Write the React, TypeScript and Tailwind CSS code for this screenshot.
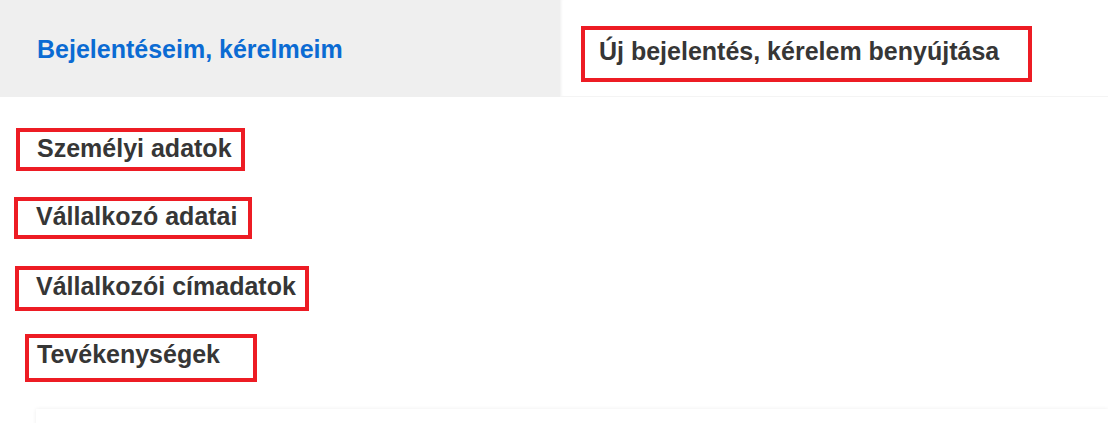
const items = [
  { label: 'Személyi adatok', box: 'mt-[31px] ml-[16px] w-[229px] h-[43px] pl-[17px] pb-[2px]' },
  { label: 'Vállalkozó adatai', box: 'mt-[26px] ml-[14px] w-[238px] h-[42px] pl-[18px] pb-[2px]' },
  { label: 'Vállalkozói címadatok', box: 'mt-[27px] ml-[15px] w-[294px] h-[45px] pl-[17px] pb-[4px]' },
  { label: 'Tevékenységek', box: 'mt-[23px] ml-[25px] w-[232px] h-[48px] pl-[8px] pb-[7px]' },
]

export default function App() {
  return (
    <div className="h-[423px] w-[1108px] overflow-hidden bg-white font-['Liberation_Sans',Arial,sans-serif]">
      <div className="flex h-[97px]">
        <div className="flex w-[560px] items-center bg-[#efefef] pl-[37px] pt-[2px]">
          <span className="text-[25px] font-bold text-[#0b6bd3]">Bejelentéseim, kérelmeim</span>
        </div>
        <div className="flex-1 border-b border-[#f4f4f4] bg-white pl-[21px] pt-[26px] shadow-[inset_3px_0_3px_-2px_rgba(0,0,0,0.07)]">
          <div className="flex h-[56px] w-[451px] items-center border-4 border-[#ed1c24] pl-[14px] pb-[4px]">
            <span className="text-[25px] font-bold text-[#363636]">Új bejelentés, kérelem benyújtása</span>
          </div>
        </div>
      </div>

      <div className="flex flex-col items-start">
        {items.map((item) => (
          <div key={item.label} className={`flex items-center border-4 border-[#ed1c24] ${item.box}`}>
            <span className="text-[25px] font-bold text-[#363636]">{item.label}</span>
          </div>
        ))}
      </div>

      <div className="ml-[36px] mt-[27px] h-[40px] bg-white shadow-[0_0_4px_rgba(0,0,0,0.07)]" />
    </div>
  )
}
